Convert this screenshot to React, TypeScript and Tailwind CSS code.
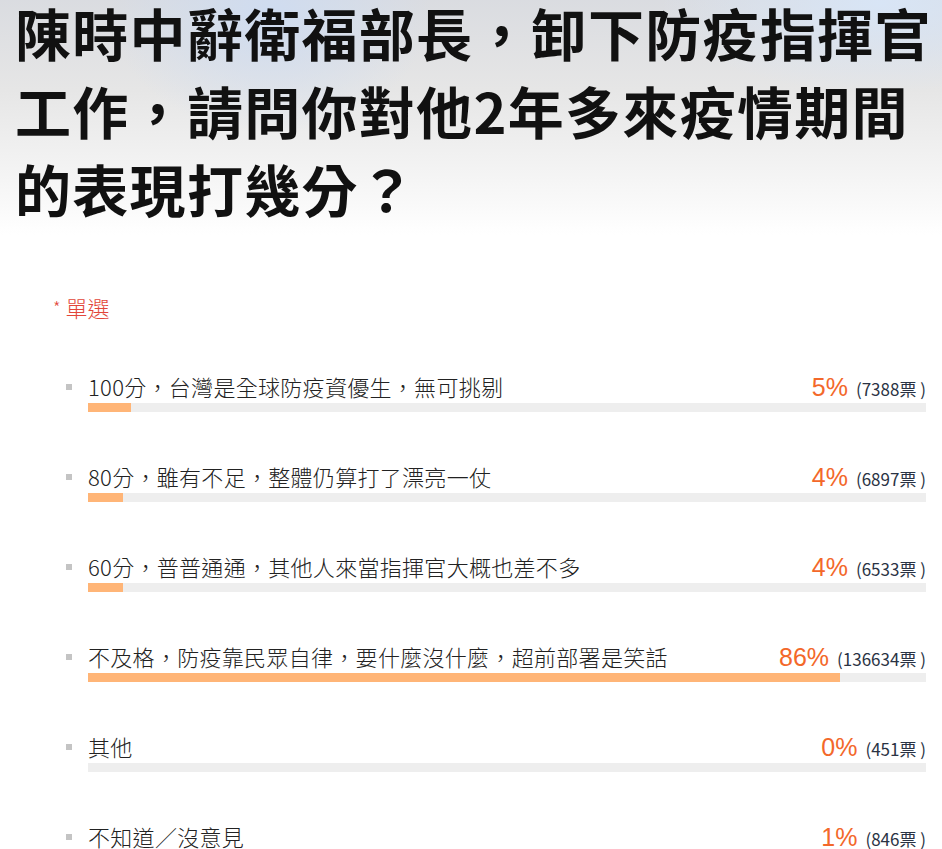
import React from 'react';

interface PollOption {
  label: string;
  pct: number;
  votes: number;
  bar: number; // width of filled part, px
}

const OPTIONS: PollOption[] = [
  { label: '100分，台灣是全球防疫資優生，無可挑剔', pct: 5, votes: 7388, bar: 43 },
  { label: '80分，雖有不足，整體仍算打了漂亮一仗', pct: 4, votes: 6897, bar: 35 },
  { label: '60分，普普通通，其他人來當指揮官大概也差不多', pct: 4, votes: 6533, bar: 35 },
  { label: '不及格，防疫靠民眾自律，要什麼沒什麼，超前部署是笑話', pct: 86, votes: 136634, bar: 752 },
  { label: '其他', pct: 0, votes: 451, bar: 0 },
  { label: '不知道／沒意見', pct: 1, votes: 846, bar: 9 },
];

const BODY_FONT = "font-['Noto_Sans_CJK_TC','Noto_Sans_CJK_SC',sans-serif]";

const OptionRow: React.FC<{ option: PollOption }> = ({ option }) => (
  <li className="flex">
    {/* 項目符號 */}
    <div className="w-[22px] shrink-0 pt-[13px]">
      <div className="w-[6px] h-[6px] bg-[#c4c4c4]" />
    </div>
    <div className="flex-1">
      <div className="flex items-baseline justify-between h-[30px]">
        <span className="text-[22px] leading-[30px] text-[#222] font-light tracking-[0.3px]">
          {option.label}
        </span>
        <span className="flex items-baseline whitespace-nowrap">
          <span className="text-[25px] leading-[30px] text-[#f3682a] font-['Liberation_Sans',sans-serif] font-light">
            {option.pct}%
          </span>
          <span className="ml-[8px] text-[17px] leading-[30px] text-[#2a3344]">
            ({option.votes}票 )
          </span>
        </span>
      </div>
      <div className="mt-[2px] h-[9px] bg-[#eeeeee]">
        <div className="h-full bg-[#ffb577]" style={{ width: option.bar }} />
      </div>
    </div>
  </li>
);

export default function App() {
  return (
    <div className={`min-h-screen bg-white ${BODY_FONT}`}>
      <header className="bg-[radial-gradient(ellipse_160px_120px_at_270px_20px,#cfdcf0_0%,transparent_100%),radial-gradient(ellipse_220px_90px_at_880px_10px,#d8e5f6_0%,transparent_100%),linear-gradient(180deg,#d9dbe0_0%,#e6e6e6_40%,#f4f4f4_75%,#ffffff_100%)] pl-[15px] pt-[0px] pb-[8px]">
        <h1 className="text-[56px] leading-[78px] font-bold text-[#111] -mt-[7px] tracking-[1.3px]">
          陳時中辭衛福部長，卸下防疫指揮官
          <br />
          工作，請問你對他2年多來疫情期間
          <br />
          的表現打幾分？
        </h1>
      </header>

      <main className="pl-[53px] pr-[16px] pt-[57px]">
        <div className="text-[22px] leading-[30px] text-[#e2463a] font-light">
          <span className="text-[17px] align-top">*</span> 單選
        </div>
        <ul className="mt-[49px] ml-[13px] flex flex-col gap-[49px]">
          {OPTIONS.map((o) => (
            <OptionRow key={o.label} option={o} />
          ))}
        </ul>
      </main>
    </div>
  );
}
